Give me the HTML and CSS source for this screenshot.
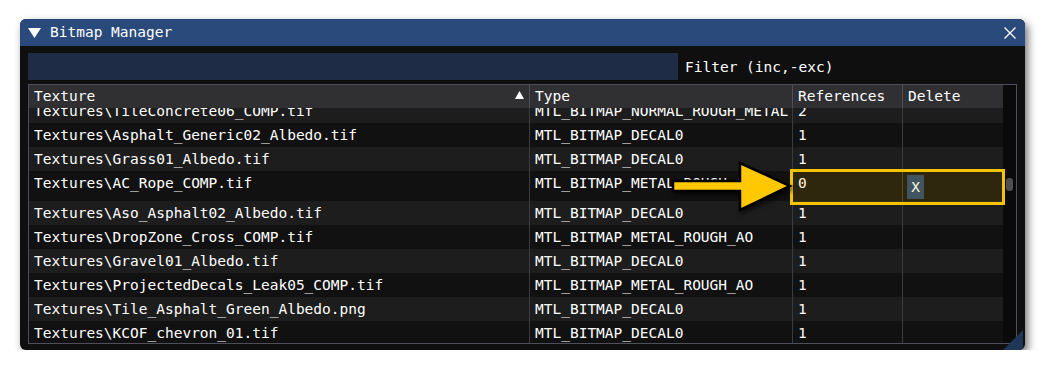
FILE: index.html
```html
<!DOCTYPE html>
<html lang="en">
<head>
    <meta charset="UTF-8">
    <meta name="viewport" content="width=device-width, initial-scale=1.0">
    <title>Bitmap Manager</title>
    <link rel="stylesheet" href="styles.css">
</head>
<body>
    <div class="window">
        <div class="titlebar">
            <svg class="collapse" width="13" height="10" viewBox="0 0 13 10"><polygon points="0,0 13,0 6.5,10" fill="#fff"/></svg>
            <span class="title">Bitmap Manager</span>
            <svg class="close" width="12" height="12" viewBox="0 0 12 12"><path d="M0.5 0.5 L11.5 11.5 M11.5 0.5 L0.5 11.5" stroke="#fff" stroke-width="1.3"/></svg>
        </div>

        <div class="content">
            <div class="filter-row">
                <div class="filter-input"></div>
                <span class="filter-label">Filter (inc,-exc)</span>
            </div>

            <div class="table">
                <div class="table-main">
                    <div class="row header">
                        <div class="cell sortable">Texture
                            <svg class="sort" width="9" height="8" viewBox="0 0 9 8"><polygon points="4.5,0 9,8 0,8" fill="#fff"/></svg>
                        </div>
                        <div class="cell">Type</div>
                        <div class="cell">References</div>
                        <div class="cell">Delete</div>
                    </div>
                    <div class="body">
                        <div class="row alt first">
                            <div class="cell">Textures\TileConcrete06_COMP.tif</div>
                            <div class="cell">MTL_BITMAP_NORMAL_ROUGH_METAL</div>
                            <div class="cell">2</div>
                            <div class="cell"></div>
                        </div>
                        <div class="row">
                            <div class="cell">Textures\Asphalt_Generic02_Albedo.tif</div>
                            <div class="cell">MTL_BITMAP_DECAL0</div>
                            <div class="cell">1</div>
                            <div class="cell"></div>
                        </div>
                        <div class="row alt">
                            <div class="cell">Textures\Grass01_Albedo.tif</div>
                            <div class="cell">MTL_BITMAP_DECAL0</div>
                            <div class="cell">1</div>
                            <div class="cell"></div>
                        </div>
                        <div class="row">
                            <div class="cell">Textures\AC_Rope_COMP.tif</div>
                            <div class="cell">MTL_BITMAP_METAL_ROUGH_AO</div>
                            <div class="cell">0</div>
                            <div class="cell"><button class="btn-delete">X</button></div>
                        </div>
                        <div class="row alt">
                            <div class="cell">Textures\Aso_Asphalt02_Albedo.tif</div>
                            <div class="cell">MTL_BITMAP_DECAL0</div>
                            <div class="cell">1</div>
                            <div class="cell"></div>
                        </div>
                        <div class="row">
                            <div class="cell">Textures\DropZone_Cross_COMP.tif</div>
                            <div class="cell">MTL_BITMAP_METAL_ROUGH_AO</div>
                            <div class="cell">1</div>
                            <div class="cell"></div>
                        </div>
                        <div class="row alt">
                            <div class="cell">Textures\Gravel01_Albedo.tif</div>
                            <div class="cell">MTL_BITMAP_DECAL0</div>
                            <div class="cell">1</div>
                            <div class="cell"></div>
                        </div>
                        <div class="row">
                            <div class="cell">Textures\ProjectedDecals_Leak05_COMP.tif</div>
                            <div class="cell">MTL_BITMAP_METAL_ROUGH_AO</div>
                            <div class="cell">1</div>
                            <div class="cell"></div>
                        </div>
                        <div class="row alt">
                            <div class="cell">Textures\Tile_Asphalt_Green_Albedo.png</div>
                            <div class="cell">MTL_BITMAP_DECAL0</div>
                            <div class="cell">1</div>
                            <div class="cell"></div>
                        </div>
                        <div class="row">
                            <div class="cell">Textures\KCOF_chevron_01.tif</div>
                            <div class="cell">MTL_BITMAP_DECAL0</div>
                            <div class="cell">1</div>
                            <div class="cell"></div>
                        </div>
                    </div>
                </div>
                <div class="scrollbar">
                    <div class="grab"></div>
                </div>
            </div>
        </div>

        <!-- annotation overlays -->
        <div class="callout"></div>
        <svg class="arrow" width="135" height="60" viewBox="0 0 135 60">
            <polygon points="8,22 75,22 75,4 125,27 75,51 75,32 8,32" fill="#ffc800" stroke="#000" stroke-width="2.5" stroke-linejoin="miter"/>
        </svg>
        <svg class="grip" width="20" height="20" viewBox="0 0 20 20"><polygon points="0,20 20,0 20,20" fill="#1e3757"/></svg>
    </div>
</body>
</html>
```

FILE: styles.css
```css
body {
    margin: 0;
    background: #ffffff;
    font-family: 'DejaVu Sans Mono', monospace;
    font-size: 14.5px;
    color: #ffffff;
}
.window {
    position: relative;
    margin: 19px 0 0 20px;
    width: 1005px;
    height: 331px;
    background: #0f0f0f;
    border-radius: 6px;
    overflow: hidden;
    box-shadow: 3px 4px 8px rgba(0, 0, 0, 0.55);
}
.titlebar {
    height: 27px;
    background: #294a7a;
    display: flex;
    align-items: center;
    padding: 0 9px 0 8px;
}
.collapse {
    margin-right: 9px;
}
.title {
    line-height: 17px;
}
.close {
    margin-left: auto;
}
.content {
    padding: 7px 8px 0 8px;
}
.filter-row {
    display: flex;
    align-items: center;
    height: 27px;
}
.filter-input {
    width: 650px;
    height: 27px;
    background: #1e2d45;
}
.filter-label {
    margin-left: 7px;
}
.table {
    margin-top: 4px;
    width: 987px;
    height: 258px;
    border: 1px solid #4f4f59;
    display: flex;
}
.table-main {
    width: 974px;
    display: flex;
    flex-direction: column;
}
.row {
    display: grid;
    grid-template-columns: 501px 263px 110px 100px;
    background: #111111;
}
.row.alt {
    background: #1d1d1d;
}
.cell {
    padding: 3px 5px;
    line-height: 18px;
    white-space: nowrap;
    overflow: hidden;
    border-right: 1px solid #3b3b40;
}
.cell:last-child {
    border-right: none;
}
.header {
    background: #303033;
}
.header .cell {
    line-height: 17px;
    border-right-color: #4f4f59;
}
.sortable {
    display: flex;
    align-items: center;
    justify-content: space-between;
}
.sort {
    margin-top: -4px;
}
.body {
    flex: 1;
    overflow: hidden;
}
.first {
    margin-top: -9px;
}
.btn-delete {
    display: block;
    width: 17px;
    height: 24px;
    margin: 1px 0 -1px -1px;
    padding: 0;
    border: none;
    background: #25466e;
    color: #ffffff;
    font-family: 'DejaVu Sans Mono', monospace;
    font-size: 14.5px;
}
.scrollbar {
    width: 13px;
    background: #0a0a0a;
}
.grab {
    width: 7px;
    height: 13px;
    margin: 93px 0 0 3px;
    background: #4f4f4f;
    border-radius: 3px;
}
.callout {
    position: absolute;
    left: 770px;
    top: 150px;
    width: 215px;
    height: 36px;
    box-sizing: border-box;
    border: 3px solid #f5c400;
    background: rgba(245, 190, 0, 0.13);
}
.arrow {
    position: absolute;
    left: 645px;
    top: 140px;
    filter: drop-shadow(2px 3px 2px rgba(0, 0, 0, 0.6));
}
.grip {
    position: absolute;
    right: 2px;
    bottom: 0;
}
```
